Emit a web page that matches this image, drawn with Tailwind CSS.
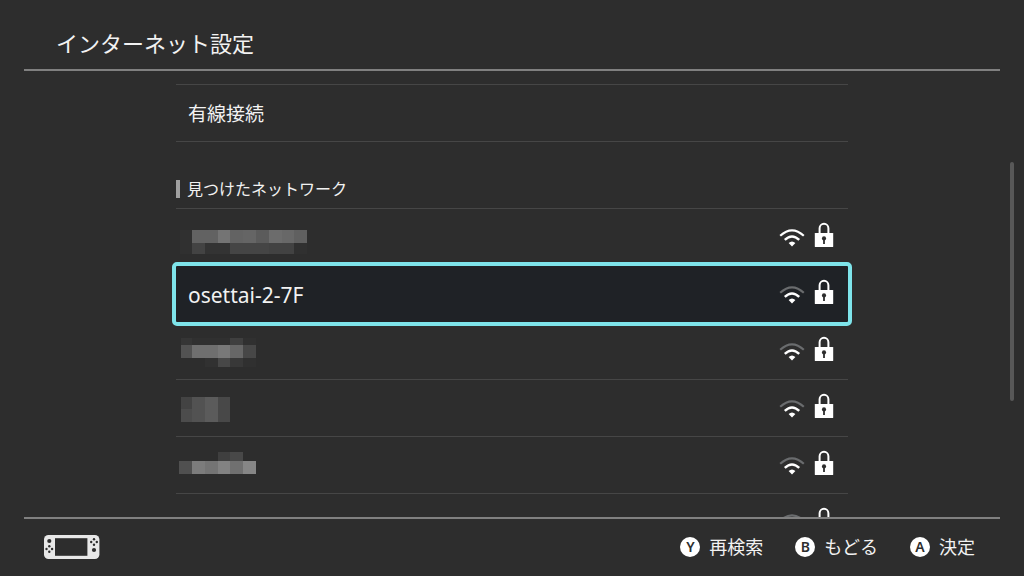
<!DOCTYPE html>
<html lang="ja" class="h-full">
<head>
  <meta charset="UTF-8" />
  <meta name="viewport" content="width=device-width, initial-scale=1.0" />
  <title>インターネット設定</title>
  <script src="https://cdn.jsdelivr.net/npm/@tailwindcss/browser@4"></script>
</head>

<body class="h-screen overflow-hidden flex flex-col bg-[#2d2d2d] text-[#f2f2f2] font-['Noto_Sans','Noto_Sans_CJK_JP',sans-serif]">

  <!-- Shared icons -->
  <svg class="hidden" aria-hidden="true">
    <symbol id="wifi" viewBox="0 0 26 20">
      <path d="M1.2 7.8 Q13 -3.2 24.8 7.8" fill="none" stroke="currentColor" stroke-width="2.2" />
      <path d="M5.8 11.8 Q13 5 20.2 11.8" fill="none" stroke="#fff" stroke-width="2.4" />
      <path d="M9.6 15 Q13 12 16.4 15 L13 18.6 Z" fill="#fff" />
    </symbol>
    <symbol id="lock" viewBox="0 0 20 26">
      <path d="M5.6 12 V6.2 a4.4 4.4 0 0 1 8.8 0 V12" fill="none" stroke="#fff" stroke-width="2" />
      <rect x="0.8" y="11" width="18.4" height="14" rx="0.6" fill="#fff" />
      <circle cx="10" cy="16.4" r="2.1" fill="#2d2d2d" />
      <rect x="9.1" y="17" width="1.8" height="5" fill="#2d2d2d" />
    </symbol>
  </svg>

  <header class="mx-6 h-[71px] shrink-0 flex items-center px-8 pt-4 border-b-2 border-[#808080]">
    <h1 class="text-[22px] leading-8">インターネット設定</h1>
  </header>

  <main class="relative flex-1 min-h-0 overflow-hidden px-6 pt-[13px]">
    <div class="max-w-2xl mx-auto">
      <button type="button" class="w-full h-[58px] flex items-center px-3 pt-0.5 border-y border-[#464646] text-[19px] text-left">有線接続</button>

      <section>
        <div class="h-[67px] flex items-end pb-[7px] border-b border-[#464646]">
          <h2 class="flex items-center gap-[7px] text-base leading-6">
            <span class="w-1 h-[18px] bg-[#a0a0a0]"></span>見つけたネットワーク
          </h2>
        </div>

        <ul>
          <li class="border-b border-[#464646]">
            <button type="button" class="w-full h-14 flex items-center pr-3.5" aria-label="ネットワーク 1">
              <svg class="w-36 h-14" viewBox="0 0 144 56" shape-rendering="crispEdges">
                <rect x="4" y="21" width="12" height="24" fill="#303030" />
                <rect x="16" y="21" width="26" height="13" fill="#626262" />
                <rect x="42" y="21" width="12" height="13" fill="#747474" />
                <rect x="54" y="21" width="13" height="13" fill="#636363" />
                <rect x="67" y="21" width="13" height="13" fill="#656565" />
                <rect x="80" y="21" width="13" height="13" fill="#5b5b5b" />
                <rect x="93" y="21" width="13" height="13" fill="#6c6c6c" />
                <rect x="106" y="21" width="12" height="13" fill="#686868" />
                <rect x="118" y="21" width="13" height="13" fill="#606060" />
                <rect x="16" y="34" width="13" height="11" fill="#434343" />
                <rect x="29" y="34" width="25" height="11" fill="#333333" />
                <rect x="54" y="34" width="39" height="11" fill="#454545" />
                <rect x="93" y="34" width="25" height="11" fill="#424242" />
                <rect x="118" y="34" width="13" height="11" fill="#303030" />
              </svg>
              <svg class="ml-auto w-[26px] h-5 mt-0.5 text-white"><use href="#wifi" /></svg>
              <svg class="ml-[9px] mb-1 w-5 h-[26px]"><use href="#lock" /></svg>
            </button>
          </li>
          <li class="relative z-10 border-b border-[#464646]">
            <button type="button" class="w-full h-14 flex items-center pl-3 pr-3.5 bg-[#1f2226] rounded-[1px] outline-4 outline-[#7ee4ea]">
              <span class="pt-0.5 text-[21px] leading-8">osettai-2-7F</span>
              <svg class="ml-auto w-[26px] h-5 mt-0.5 text-[#6a6c6e]"><use href="#wifi" /></svg>
              <svg class="ml-[9px] mb-1 w-5 h-[26px]"><use href="#lock" /></svg>
            </button>
          </li>
          <li class="border-b border-[#464646]">
            <button type="button" class="w-full h-14 flex items-center pr-3.5" aria-label="ネットワーク 3">
              <svg class="w-36 h-14" viewBox="0 0 144 56" shape-rendering="crispEdges">
                <rect x="5" y="15" width="11" height="7" fill="#353535" />
                <rect x="16" y="15" width="38" height="7" fill="#303030" />
                <rect x="54" y="15" width="13" height="7" fill="#3f3f3f" />
                <rect x="67" y="15" width="13" height="7" fill="#303030" />
                <rect x="5" y="22" width="11" height="13" fill="#525252" />
                <rect x="16" y="22" width="26" height="13" fill="#6f6f6f" />
                <rect x="42" y="22" width="12" height="13" fill="#787878" />
                <rect x="54" y="22" width="13" height="13" fill="#676767" />
                <rect x="67" y="22" width="13" height="13" fill="#474747" />
                <rect x="29" y="35" width="13" height="9" fill="#313131" />
                <rect x="42" y="35" width="12" height="9" fill="#474747" />
                <rect x="54" y="35" width="13" height="9" fill="#383838" />
                <rect x="67" y="35" width="13" height="9" fill="#303030" />
              </svg>
              <svg class="ml-auto w-[26px] h-5 mt-0.5 text-[#6a6c6e]"><use href="#wifi" /></svg>
              <svg class="ml-[9px] mb-1 w-5 h-[26px]"><use href="#lock" /></svg>
            </button>
          </li>
          <li class="border-b border-[#464646]">
            <button type="button" class="w-full h-14 flex items-center pr-3.5" aria-label="ネットワーク 4">
              <svg class="w-36 h-14" viewBox="0 0 144 56" shape-rendering="crispEdges">
                <rect x="5" y="17" width="11" height="12" fill="#434343" />
                <rect x="5" y="29" width="11" height="13" fill="#4c4c4c" />
                <rect x="16" y="17" width="13" height="25" fill="#525252" />
                <rect x="29" y="17" width="13" height="25" fill="#5b5b5b" />
                <rect x="42" y="17" width="12" height="25" fill="#484848" />
              </svg>
              <svg class="ml-auto w-[26px] h-5 mt-0.5 text-[#6a6c6e]"><use href="#wifi" /></svg>
              <svg class="ml-[9px] mb-1 w-5 h-[26px]"><use href="#lock" /></svg>
            </button>
          </li>
          <li class="border-b border-[#464646]">
            <button type="button" class="w-full h-14 flex items-center pr-3.5" aria-label="ネットワーク 5">
              <svg class="w-36 h-14" viewBox="0 0 144 56" shape-rendering="crispEdges">
                <rect x="42" y="15" width="12" height="9" fill="#3f3f3f" />
                <rect x="54" y="15" width="13" height="9" fill="#484848" />
                <rect x="3" y="24" width="13" height="13" fill="#505050" />
                <rect x="16" y="24" width="13" height="13" fill="#7c7c7c" />
                <rect x="29" y="24" width="13" height="13" fill="#747474" />
                <rect x="42" y="24" width="12" height="13" fill="#828282" />
                <rect x="54" y="24" width="13" height="13" fill="#707070" />
                <rect x="67" y="24" width="13" height="13" fill="#868686" />
              </svg>
              <svg class="ml-auto w-[26px] h-5 mt-0.5 text-[#6a6c6e]"><use href="#wifi" /></svg>
              <svg class="ml-[9px] mb-1 w-5 h-[26px]"><use href="#lock" /></svg>
            </button>
          </li>
          <li class="border-b border-[#464646]">
            <button type="button" class="w-full h-14 flex items-center pr-3.5" aria-label="ネットワーク 6">
              <svg class="ml-auto w-[26px] h-5 mt-0.5 text-[#6a6c6e]"><use href="#wifi" /></svg>
              <svg class="ml-[9px] mb-1 w-5 h-[26px]"><use href="#lock" /></svg>
            </button>
          </li>
        </ul>
      </section>
    </div>

    <!-- Scroll thumb -->
    <div class="absolute right-2.5 top-[91px] w-1 h-[239px] rounded-full bg-[#585858]"></div>
  </main>

  <footer class="mx-6 h-[59px] shrink-0 flex items-center justify-between pl-5 pr-[25px] pb-0.5 border-t-2 border-[#808080]">
    <svg class="w-14 h-6" viewBox="0 0 56 24" aria-hidden="true">
      <rect width="55.4" height="24" rx="4.5" fill="#e8e8e8" />
      <rect x="11" y="3.2" width="32.4" height="17.6" fill="#2d2d2d" />
      <g fill="#2d2d2d">
        <circle cx="5.3" cy="6" r="2.1" />
        <circle cx="5.3" cy="11.2" r="1.2" />
        <circle cx="5.3" cy="16.8" r="1.2" />
        <circle cx="2.5" cy="14" r="1.2" />
        <circle cx="8.1" cy="14" r="1.2" />
        <circle cx="50" cy="4.2" r="1.2" />
        <circle cx="50" cy="9.8" r="1.2" />
        <circle cx="47.2" cy="7" r="1.2" />
        <circle cx="52.8" cy="7" r="1.2" />
        <circle cx="50" cy="15" r="2.1" />
      </g>
    </svg>

    <div class="flex items-center gap-8 text-lg leading-6">
      <button type="button" class="flex items-center gap-[9px]">
        <span class="size-5 rounded-full bg-white text-[#2d2d2d] text-sm leading-5 font-semibold text-center">Y</span>再検索
      </button>
      <button type="button" class="flex items-center gap-[9px]">
        <span class="size-5 rounded-full bg-white text-[#2d2d2d] text-sm leading-5 font-semibold text-center">B</span>もどる
      </button>
      <button type="button" class="flex items-center gap-[9px]">
        <span class="size-5 rounded-full bg-white text-[#2d2d2d] text-sm leading-5 font-semibold text-center">A</span>決定
      </button>
    </div>
  </footer>
</body>
</html>
